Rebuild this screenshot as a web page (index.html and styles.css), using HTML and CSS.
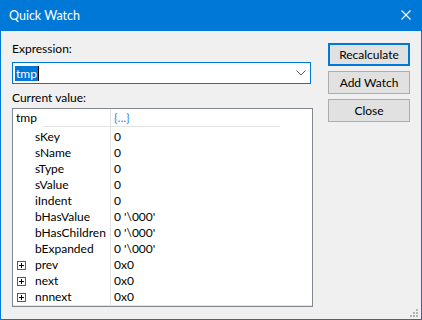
FILE: index.html
```html
<!DOCTYPE html>
<html lang="en">
<head>
    <meta charset="UTF-8">
    <meta name="viewport" content="width=device-width, initial-scale=1.0">
    <title>Quick Watch</title>
    <link rel="stylesheet" href="styles.css">
</head>
<body>
    <div class="window">
        <div class="titlebar">
            <span class="title">Quick Watch</span>
            <svg class="close" width="10" height="10" viewBox="0 0 10 10">
                <path d="M0.5 0.5 L9.5 9.5 M9.5 0.5 L0.5 9.5" stroke="#ffffff" stroke-width="1.1" fill="none"/>
            </svg>
        </div>

        <div class="dialog">
            <div class="main">
                <div class="label">Expression:</div>
                <div class="combo">
                    <span class="selected">tmp</span><span class="caret"></span>
                    <svg class="chevron" width="10" height="6" viewBox="0 0 10 6">
                        <path d="M0.5 0.5 L5 5 L9.5 0.5" stroke="#606060" stroke-width="1" fill="none"/>
                    </svg>
                </div>

                <div class="label label-value">Current value:</div>
                <div class="tree">
                    <div class="row row-root">
                        <span class="name">tmp</span>
                        <span class="value value-link">{...}</span>
                    </div>
                    <div class="rule"></div>
                    <div class="rows">
                        <div class="row"><span class="name child">sKey</span><span class="value">0</span></div>
                        <div class="row"><span class="name child">sName</span><span class="value">0</span></div>
                        <div class="row"><span class="name child">sType</span><span class="value">0</span></div>
                        <div class="row"><span class="name child">sValue</span><span class="value">0</span></div>
                        <div class="row"><span class="name child">iIndent</span><span class="value">0</span></div>
                        <div class="row"><span class="name child">bHasValue</span><span class="value">0 '\000'</span></div>
                        <div class="row"><span class="name child">bHasChildren</span><span class="value">0 '\000'</span></div>
                        <div class="row"><span class="name child">bExpanded</span><span class="value">0 '\000'</span></div>
                        <div class="row"><span class="name"><span class="expander"></span>prev</span><span class="value">0x0</span></div>
                        <div class="row"><span class="name"><span class="expander"></span>next</span><span class="value">0x0</span></div>
                        <div class="row"><span class="name"><span class="expander"></span>nnnext</span><span class="value">0x0</span></div>
                    </div>
                </div>
            </div>

            <div class="buttons">
                <button class="btn btn-default">Recalculate</button>
                <button class="btn">Add Watch</button>
                <button class="btn">Close</button>
            </div>
        </div>

        <svg class="grip" width="8" height="8" viewBox="0 0 8 8">
            <rect x="6" y="0" width="2" height="2" fill="#b4b4b4"/>
            <rect x="3" y="3" width="2" height="2" fill="#b4b4b4"/>
            <rect x="6" y="3" width="2" height="2" fill="#b4b4b4"/>
            <rect x="0" y="6" width="2" height="2" fill="#b4b4b4"/>
            <rect x="3" y="6" width="2" height="2" fill="#b4b4b4"/>
            <rect x="6" y="6" width="2" height="2" fill="#b4b4b4"/>
        </svg>
    </div>
</body>
</html>
```

FILE: styles.css
```css
/* Quick Watch dialog */
body {
    margin: 0;
    font-family: Lato, 'Liberation Sans', sans-serif;
    font-size: 12px;
    color: #000000;
}

.window {
    position: relative;
    width: 422px;
    height: 320px;
    box-sizing: border-box;
    border: 1px solid #0078d7;
    border-top: none;
    background-color: #f0f0f0;
}

.titlebar {
    display: flex;
    align-items: center;
    justify-content: space-between;
    height: 31px;
    padding: 0 10px 1px 8px;
    box-sizing: border-box;
    background-color: #0078d7;
    color: white;
}

.title {
    font-size: 12.5px;
}

.close {
    display: block;
}

.dialog {
    display: flex;
    padding: 10px 11px 0 11px;
}

.main {
    width: 301px;
}

.label {
    height: 16px;
    line-height: 16px;
}

.label-value {
    margin-top: 6px;
    margin-bottom: 2px;
}

.combo {
    display: flex;
    align-items: center;
    width: 299px;
    height: 22px;
    margin-top: 5px;
    padding: 0 4px 0 2px;
    box-sizing: border-box;
    border: 1px solid #0078d7;
    background-color: white;
}

.selected {
    height: 15px;
    line-height: 15px;
    padding: 0 1px;
    background-color: #0078d7;
    color: white;
}

.caret {
    width: 1px;
    height: 15px;
    background-color: #000000;
}

.chevron {
    display: block;
    margin-left: auto;
}

.tree {
    height: 199px;
    box-sizing: border-box;
    border: 1px solid #828790;
    background: linear-gradient(#e3e3e3, #e3e3e3) no-repeat 97px 0 / 1px 100%, white;
}

.row {
    display: flex;
    height: 16px;
    line-height: 16px;
}

.row-root {
    height: 17px;
    line-height: 17px;
}

.rule {
    height: 1px;
    width: 237px;
    margin-left: 30px;
    background-color: #e3e3e3;
}

.rows {
    margin-top: 2px;
    border-bottom: 1px solid #e3e3e3;
}

.name {
    display: flex;
    align-items: center;
    width: 98px;
    padding-left: 3px;
    box-sizing: border-box;
}

.name.child {
    padding-left: 22px;
}

.expander {
    position: relative;
    width: 9px;
    height: 9px;
    margin: 0 9px 0 1px;
    box-sizing: border-box;
    border: 1px solid #5a5a5a;
    background:
        linear-gradient(#000, #000) no-repeat center / 5px 1px,
        linear-gradient(#000, #000) no-repeat center / 1px 5px,
        white;
}

.value {
    padding-left: 3px;
}

.value-link {
    color: #2a86e0;
}

.buttons {
    display: flex;
    flex-direction: column;
    gap: 5px;
    width: 82px;
    margin-left: 15px;
    padding-top: 2px;
}

.btn {
    height: 23px;
    padding: 0;
    font-family: inherit;
    font-size: 12px;
    color: #000000;
    background-color: #e1e1e1;
    border: 1px solid #adadad;
}

.btn-default {
    border: 2px solid #0078d7;
}

.grip {
    position: absolute;
    right: 3px;
    bottom: 2px;
}
```
